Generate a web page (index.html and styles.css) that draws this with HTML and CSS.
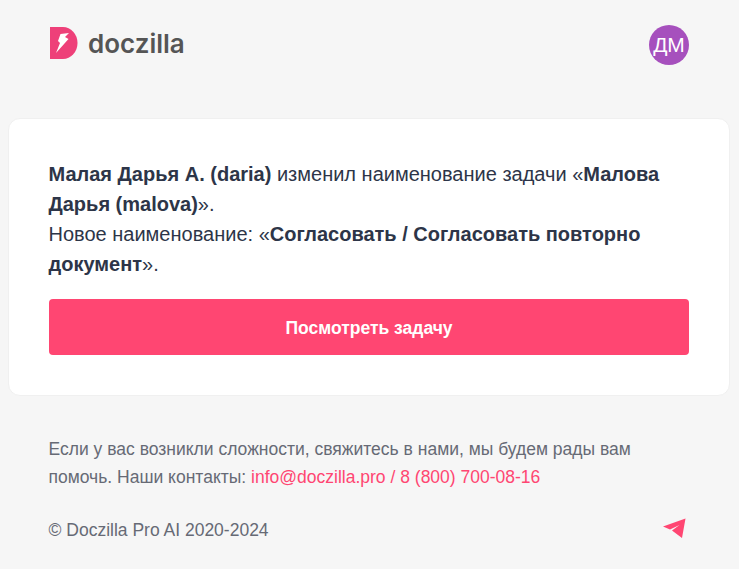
FILE: index.html
```html
<!DOCTYPE html>
<html lang="ru">

<head>
  <meta charset="UTF-8">
  <meta name="viewport" content="width=device-width, initial-scale=1.0">
  <title>Doczilla</title>
  <link rel="stylesheet" href="styles.css">
</head>

<body>
  <header class="header">
    <div class="logo">
      <svg class="logo-mark" width="28" height="32" viewBox="0 0 28 32">
        <path d="M0 0H13A14.500 16 0 0 1 13 32H0Z" fill="#ee4079" />
        <path d="M10.500 7L19 6L15 10L18.500 12L6 26L10 16L8 14Z" fill="#fff" />
      </svg>
      <span class="logo-text">doczilla</span>
    </div>
    <div class="avatar">ДМ</div>
  </header>

  <main class="card">
    <p class="message">
      <b>Малая Дарья А. (daria)</b> изменил наименование задачи «<b>Малова Дарья (malova)</b>».<br>
      Новое наименование: «<b>Согласовать / Согласовать повторно документ</b>».
    </p>
    <a class="button" href="#">Посмотреть задачу</a>
  </main>

  <footer class="footer">
    <p class="help">
      Если у вас возникли сложности, свяжитесь в нами, мы будем рады вам помочь. Наши контакты:
      <a href="#">info@doczilla.pro</a> <span class="accent">/</span> <a href="#">8 (800) 700-08-16</a>
    </p>
    <div class="bottom">
      <span>© Doczilla Pro AI 2020-2024</span>
      <svg class="plane" width="26" height="22" viewBox="0 0 26 22">
        <path d="M2 9.500L24.500 1.500L21 21L11 13.500L18.500 8L9 12.500Z" fill="#ff4672" />
      </svg>
    </div>
  </footer>
</body>

</html>
```

FILE: styles.css
```css
body {
  margin: 0;
  background-color: #f6f6f6;
  font-family: "Liberation Sans", Arial, sans-serif;
  color: #2d3548;
}

.header {
  display: flex;
  justify-content: space-between;
  align-items: center;
  height: 90px;
  padding: 0 50px 0 50px;
}

.logo {
  display: flex;
  align-items: center;
  gap: 10px;
  margin-top: -4px;
}

.logo-mark {
  display: block;
}

.logo-text {
  font-family: Inter, sans-serif;
  font-size: 26px;
  font-weight: 600;
  color: #555;
}

.avatar {
  display: flex;
  justify-content: center;
  align-items: center;
  width: 40px;
  height: 40px;
  border-radius: 50%;
  background-color: #a650bd;
  color: #fff;
  font-size: 21px;
}

.card {
  margin: 28px 9px 0 8px;
  padding: 40px;
  background-color: #fff;
  border: 1px solid #f0f0f0;
  border-radius: 12px;
}

.message {
  margin: 0 0 20px -0.500px;
  font-size: 20px;
  line-height: 30px;
}

.button {
  display: block;
  height: 56px;
  line-height: 58px;
  border-radius: 4px;
  background-color: #ff4672;
  color: #fff;
  font-size: 17.500px;
  font-weight: bold;
  text-align: center;
  text-decoration: none;
}

.footer {
  padding: 39px 49px 0 48.500px;
  font-size: 17.500px;
  color: #666a75;
}

.help {
  margin: 0;
  line-height: 28px;
}

.help a,
.accent {
  color: #ff4672;
  text-decoration: none;
}

.bottom {
  display: flex;
  justify-content: space-between;
  align-items: center;
  margin-top: 29px;
  padding-right: 3px;
}

.plane {
  display: block;
  margin-top: -6px;
  filter: blur(0.400px);
}
```
